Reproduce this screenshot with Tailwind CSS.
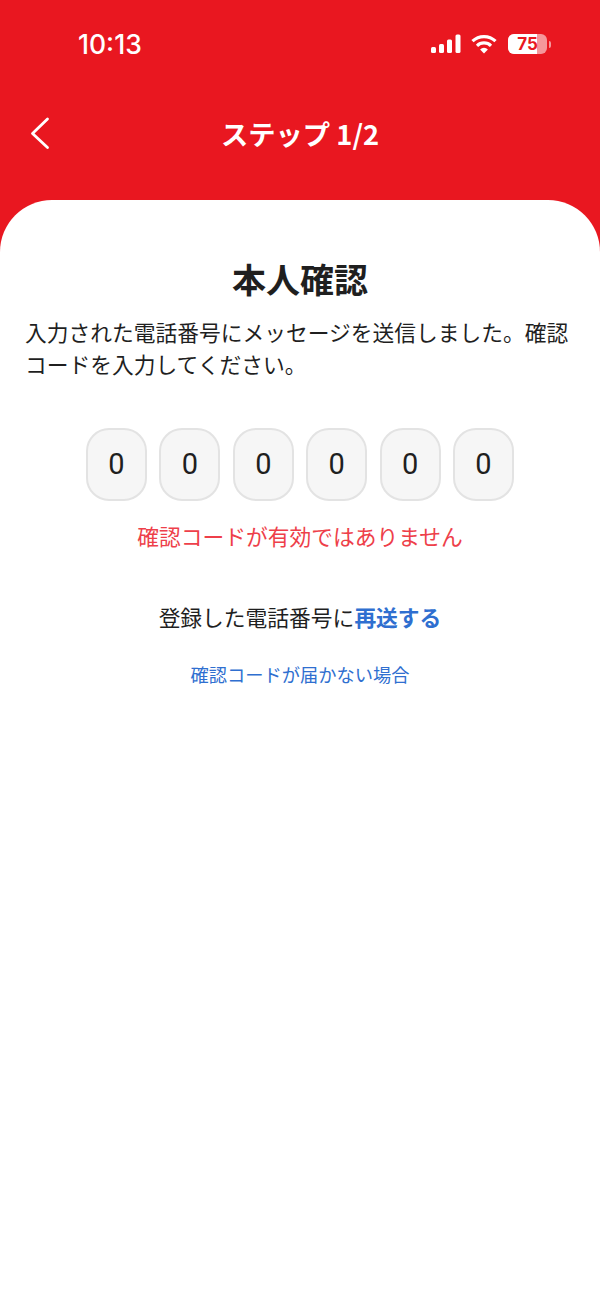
<!DOCTYPE html>
<html lang="ja">
<head>
    <meta charset="UTF-8">
    <title>本人確認</title>
    <script src="https://cdn.jsdelivr.net/npm/@tailwindcss/browser@4"></script>
</head>
<body class="bg-[#e91720] font-['Noto_Sans_CJK_JP','Noto_Sans',sans-serif] overflow-hidden">
    <div class="w-[600px] h-[1301px] flex flex-col">
        <!-- Status bar -->
        <div class="h-[90px] pl-[78px] pr-[49px] pt-[27px] flex justify-between items-start text-white">
            <span class="font-['Inter',sans-serif] text-[26.5px] leading-[34px] font-medium">10:13</span>
            <div class="flex items-center gap-[10px] pt-[7px]">
                <svg width="30" height="20" viewBox="0 0 30 20" fill="#fff">
                    <rect x="0" y="13" width="5" height="6" rx="1.5"/>
                    <rect x="8" y="10" width="5" height="9" rx="1.5"/>
                    <rect x="16" y="5.5" width="5" height="13.5" rx="1.5"/>
                    <rect x="24.5" y="0.5" width="5" height="18.5" rx="1.5"/>
                </svg>
                <svg width="26" height="20" viewBox="0 0 26 20" fill="none" stroke="#fff" stroke-width="3.2">
                    <path d="M1.5 7.2a16.5 16.5 0 0 1 23 0"/>
                    <path d="M6 11.8a10 10 0 0 1 14 0"/>
                    <path d="M13 19.5l-3.9-4.1a5.4 5.4 0 0 1 7.8 0z" fill="#fff" stroke="none"/>
                </svg>
                <div class="relative ml-[1px] w-[39px] h-[20px] rounded-[6px] bg-white/55 overflow-hidden">
                    <div class="w-[29px] h-full bg-white"></div>
                    <span class="absolute inset-0 text-center font-['Inter',sans-serif] text-[17px] leading-[20px] font-bold text-[#e91720]">75</span>
                </div>
                <div class="w-[2px] h-[7px] -ml-[8px] rounded-r-full bg-white/55"></div>
            </div>
        </div>
        <!-- Header -->
        <div class="h-[110px] relative flex justify-center">
            <svg class="absolute left-[29px] top-[25px]" width="22" height="36" viewBox="0 0 22 36" fill="none" stroke="#fff" stroke-width="2.8" stroke-linecap="round" stroke-linejoin="round">
                <path d="M18.5 4 L3.5 18.5 L18.5 32.5"/>
            </svg>
            <h2 class="pt-[23px] text-[27.3px] leading-[40px] font-bold text-white">ステップ 1/2</h2>
        </div>
        <!-- Sheet -->
        <div class="flex-1 bg-white rounded-t-[52px] px-[25px] pt-[54px] flex flex-col items-center">
            <h1 class="text-[34px] leading-[50px] font-bold text-[#1f1f1f]">本人確認</h1>
            <p class="w-full mt-[12px] text-[21.75px] leading-[32px] text-[#1f1f1f]">入力された電話番号にメッセージを送信しました。確認コードを入力してください。</p>
            <div class="mt-[48px] flex gap-[12.4px]">
                <div class="w-[61px] h-[73px] rounded-[23px] border-2 border-[#e3e3e3] bg-[#f6f6f6] flex items-center justify-center font-['Roboto',sans-serif] text-[29px] text-[#1f1f1f]">0</div>
                <div class="w-[61px] h-[73px] rounded-[23px] border-2 border-[#e3e3e3] bg-[#f6f6f6] flex items-center justify-center font-['Roboto',sans-serif] text-[29px] text-[#1f1f1f]">0</div>
                <div class="w-[61px] h-[73px] rounded-[23px] border-2 border-[#e3e3e3] bg-[#f6f6f6] flex items-center justify-center font-['Roboto',sans-serif] text-[29px] text-[#1f1f1f]">0</div>
                <div class="w-[61px] h-[73px] rounded-[23px] border-2 border-[#e3e3e3] bg-[#f6f6f6] flex items-center justify-center font-['Roboto',sans-serif] text-[29px] text-[#1f1f1f]">0</div>
                <div class="w-[61px] h-[73px] rounded-[23px] border-2 border-[#e3e3e3] bg-[#f6f6f6] flex items-center justify-center font-['Roboto',sans-serif] text-[29px] text-[#1f1f1f]">0</div>
                <div class="w-[61px] h-[73px] rounded-[23px] border-2 border-[#e3e3e3] bg-[#f6f6f6] flex items-center justify-center font-['Roboto',sans-serif] text-[29px] text-[#1f1f1f]">0</div>
            </div>
            <p class="mt-[19px] text-[21.75px] leading-[32px] text-[#ee3f4a]">確認コードが有効ではありません</p>
            <p class="mt-[49px] text-[21.75px] leading-[32px] text-[#1f1f1f]">登録した電話番号に<span class="font-bold text-[#2f6fd0]">再送する</span></p>
            <p class="mt-[27px] text-[18.25px] leading-[28px] text-[#2f6fd0]">確認コードが届かない場合</p>
        </div>
    </div>
</body>
</html>
